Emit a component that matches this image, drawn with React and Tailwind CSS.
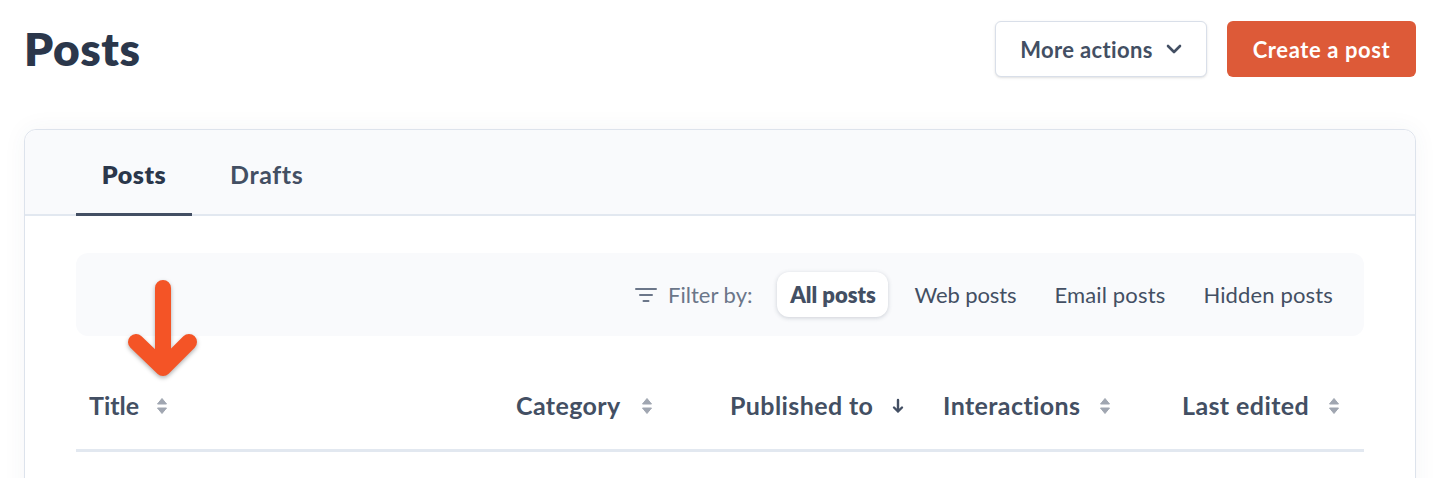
const SortIcon = ({ gap = 'ml-[19px]' }) => (
  <svg width="12" height="18" viewBox="0 0 12 18" className={`${gap} shrink-0`}>
    <path d="M6 1.5 L10.5 7 H1.5 Z M1.5 11 H10.5 L6 16.5 Z" fill="#a0a6b1" stroke="#a0a6b1" strokeWidth="1" strokeLinejoin="round" />
  </svg>
);

const DownIcon = () => (
  <svg width="12" height="16" viewBox="0 0 12 16" className="ml-[19px] shrink-0">
    <path d="M6 2 V13.5 M2 9.5 L6 13.5 L10 9.5" fill="none" stroke="#434f63" strokeWidth="2.4" strokeLinecap="round" strokeLinejoin="round" />
  </svg>
);

const columns = [
  { label: 'Title', icon: <SortIcon gap="ml-[17px]" />, spacing: 'tracking-[0px]' },
  { label: 'Category', icon: <SortIcon gap="ml-[20px]" />, spacing: 'tracking-[0.4px]' },
  { label: 'Published to', icon: <DownIcon />, spacing: 'tracking-[0.4px]' },
  { label: 'Interactions', icon: <SortIcon gap="ml-[18px]" />, spacing: 'tracking-[0.4px]' },
  { label: 'Last edited', icon: <SortIcon />, spacing: 'tracking-[0.4px]' },
];

const filters = [
  { label: 'Web posts', spacing: 'tracking-[-0.1px]' },
  { label: 'Email posts', spacing: 'tracking-[0.15px]' },
  { label: 'Hidden posts', spacing: 'tracking-[0.15px]' },
];

export default function App() {
  return (
    <div className="h-[478px] overflow-hidden bg-white font-['Lato','Liberation_Sans',sans-serif] text-[#434f63]">
      {/* Header */}
      <div className="flex items-start justify-between px-6 pt-[21px]">
        <h1 className="text-[46px] leading-[56px] font-extrabold tracking-[0.6px] text-[#2b374b]">Posts</h1>
        <div className="flex gap-5">
          <button className="flex h-14 w-[212px] items-center justify-center gap-[13px] rounded-md border border-[#d9dfe9] bg-white text-[22px] font-bold tracking-[0.35px] shadow-sm">
            More actions
            <svg width="16" height="10" viewBox="0 0 16 10">
              <path d="M2 2 L8 8 L14 2" fill="none" stroke="#434f63" strokeWidth="2.6" strokeLinecap="round" strokeLinejoin="round" />
            </svg>
          </button>
          <button className="h-14 w-[189px] rounded-md bg-[#dd5a38] text-[22px] font-bold tracking-[0.6px] text-white">
            Create a post
          </button>
        </div>
      </div>

      {/* Card */}
      <div className="mx-6 mt-[52px] h-[400px] rounded-t-xl border border-[#dde3ec] shadow-[0_0_24px_rgba(67,79,99,0.05)]">
        <div className="flex h-[86px] gap-3 rounded-t-xl border-b-2 border-[#e2e8f0] bg-[#f9fafc] pl-[51px]">
          <div className="-mb-[2px] flex h-[86px] w-[116px] items-center justify-center border-b-[3px] border-[#434f63] pt-[6px] text-[25px] font-extrabold tracking-[0.5px] text-[#2b374b]">
            Posts
          </div>
          <div className="flex h-[84px] items-center px-[26px] pt-[6px] text-[25px] font-bold tracking-[0.6px]">
            Drafts
          </div>
        </div>

        <div className="px-[51px] pt-[37px]">
          <div className="flex h-[83px] items-center justify-end rounded-xl bg-[#f9fafc] pr-[19px]">
            <svg width="22" height="16" viewBox="0 0 22 16" className="mr-[11px]">
              <path d="M1 2 H21 M5 8 H17 M8.5 14 H13.5" fill="none" stroke="#6b7689" strokeWidth="2" strokeLinecap="round" />
            </svg>
            <span className="mr-[25px] text-[22px] text-[#6b7689]">Filter by:</span>
            <span className="flex h-[45px] w-[111px] items-center justify-center rounded-xl bg-white text-[22px] font-extrabold shadow-[0_1px_4px_rgba(67,79,99,0.25)]">
              All posts
            </span>
            {filters.map((filter) => (
              <span key={filter.label} className={`ml-[14px] px-[12px] text-[22px] ${filter.spacing}`}>
                {filter.label}
              </span>
            ))}
          </div>

          <div className="grid h-[116px] grid-cols-[427px_214px_213px_239px_1fr] items-center border-b-[3px] border-[#e2e8f0] pt-[26px] pl-[13px]">
            {columns.map((col) => (
              <div key={col.label} className={`flex items-center text-[25px] font-bold whitespace-nowrap ${col.spacing}`}>
                {col.label}
                {col.icon}
              </div>
            ))}
          </div>
        </div>
      </div>

      {/* Annotation arrow */}
      <svg width="80" height="110" viewBox="0 0 80 110" className="absolute top-[274px] left-[123px] drop-shadow-[0_2px_2px_rgba(0,0,0,0.3)]">
        <path d="M40 14 V94 M13 68 L40 94 L66 68" fill="none" stroke="#f45426" strokeWidth="16" strokeLinecap="round" strokeLinejoin="round" />
      </svg>
    </div>
  );
}
